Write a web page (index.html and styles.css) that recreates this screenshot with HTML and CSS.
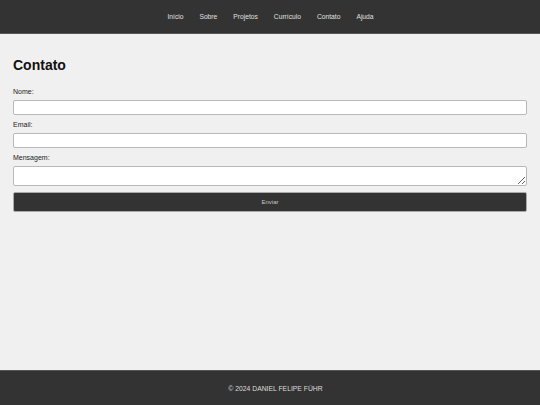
FILE: index.html
```html
<!DOCTYPE html>
<html lang="pt-BR">
<head>
<meta charset="utf-8">
<title>Contato</title>
<link rel="stylesheet" href="styles.css">
</head>
<body>
<div class="page">
  <header class="topbar">
    <nav class="nav">
      <a href="#">Início</a>
      <a href="#">Sobre</a>
      <a href="#">Projetos</a>
      <a href="#">Currículo</a>
      <a href="#">Contato</a>
      <a href="#">Ajuda</a>
    </nav>
  </header>
  <main class="content">
    <h1 class="title">Contato</h1>
    <form class="form">
      <label class="label" for="nome">Nome:</label>
      <input class="field" id="nome" type="text">
      <label class="label" for="email">Email:</label>
      <input class="field" id="email" type="email">
      <label class="label" for="msg">Mensagem:</label>
      <textarea class="field area" id="msg"></textarea>
      <button class="submit" type="button">Enviar</button>
    </form>
  </main>
  <footer class="footer">© 2024 DANIEL FELIPE FÜHR</footer>
</div>
</body>
</html>
```
FILE: styles.css
```css
html, body {
  margin: 0;
  padding: 0;
  height: 100%;
}
body {
  background: #f0f0f0;
  font-family: "Liberation Sans", Arial, sans-serif;
  color: #111;
}
.page {
  min-height: 100vh;
  display: flex;
  flex-direction: column;
}
.topbar {
  background: #333;
  height: 34px;
  display: flex;
  align-items: center;
  justify-content: center;
  border-bottom: 1px solid #555;
  box-sizing: border-box;
}
.nav {
  display: flex;
  gap: 16px;
  padding-left: 1px;
}
.nav a {
  color: #e0e0e0;
  text-decoration: none;
  font-size: 6.7px;
}
.content {
  flex: 1;
  padding: 23px 13px 0;
}
.title {
  margin: 0 0 13px;
  font-size: 14px;
  font-weight: bold;
  line-height: 17px;
  color: #111;
}
.form {
  display: flex;
  flex-direction: column;
}
.label {
  font-size: 7px;
  line-height: 9px;
  color: #222;
  margin-bottom: 4px;
}
.field {
  box-sizing: border-box;
  width: 100%;
  height: 15px;
  margin: 0 0 5px;
  border: 1px solid #b8b8b8;
  border-radius: 2px;
  background: #fff;
  padding: 2px 4px;
  font-family: inherit;
  font-size: 7px;
}
.area {
  height: 20px;
  margin-bottom: 6px;
  resize: vertical;
}
.submit {
  height: 20px;
  width: 100%;
  background: #333;
  color: #c8c8c8;
  border: 1px solid #aaa;
  border-radius: 2px;
  font-family: inherit;
  font-size: 6px;
  padding: 0;
}
.footer {
  height: 35px;
  background: #333;
  color: #dedede;
  font-size: 6.8px;
  display: flex;
  align-items: center;
  justify-content: center;
  padding-left: 11px;
  border-top: 1px solid #555;
  box-sizing: border-box;
}
```
